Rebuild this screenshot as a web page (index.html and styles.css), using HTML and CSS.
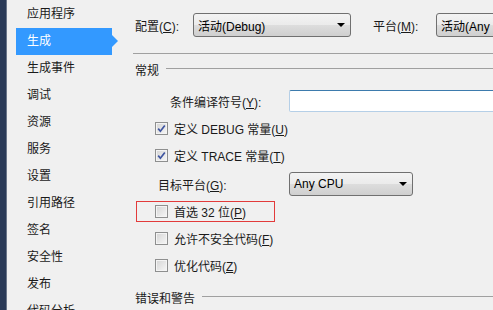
FILE: index.html
```html
<!DOCTYPE html>
<html lang="zh">
<head>
<meta charset="utf-8">
<link rel="stylesheet" href="styles.css">
</head>
<body>
<div class="app">
  <div class="strip"></div>
  <nav class="nav">
    <div class="nav-item">应用程序</div>
    <div class="nav-item selected">生成</div>
    <div class="nav-item">生成事件</div>
    <div class="nav-item">调试</div>
    <div class="nav-item">资源</div>
    <div class="nav-item">服务</div>
    <div class="nav-item">设置</div>
    <div class="nav-item">引用路径</div>
    <div class="nav-item">签名</div>
    <div class="nav-item">安全性</div>
    <div class="nav-item">发布</div>
    <div class="nav-item">代码分析</div>
  </nav>
  <main class="main">
    <div class="top-row">
      <span class="lbl-config">配置(<u>C</u>):</span>
      <div class="combo combo-config"><span>活动(Debug)</span><i class="arrow"></i></div>
      <span class="lbl-platform">平台(<u>M</u>):</span>
      <div class="combo combo-platform"><span>活动(Any CPU)</span><i class="arrow"></i></div>
    </div>
    <div class="sep"></div>
    <div class="section"><span>常规</span><div class="line"></div></div>
    <div class="field-row">
      <span class="lbl-symbols">条件编译符号(<u>Y</u>):</span>
      <div class="textbox"></div>
    </div>
    <div class="check-row first">
      <span class="cb checked"><svg width="11" height="11" viewBox="0 0 11 11"><path d="M2.2 5.6 L4.4 8.2 L8.8 2.4" fill="none" stroke="#3f55a0" stroke-width="1.7"/></svg></span>
      <span>定义 DEBUG 常量(<u>U</u>)</span>
    </div>
    <div class="check-row">
      <span class="cb checked"><svg width="11" height="11" viewBox="0 0 11 11"><path d="M2.2 5.6 L4.4 8.2 L8.8 2.4" fill="none" stroke="#3f55a0" stroke-width="1.7"/></svg></span>
      <span>定义 TRACE 常量(<u>T</u>)</span>
    </div>
    <div class="field-row target">
      <span class="lbl-target">目标平台(<u>G</u>):</span>
      <div class="combo combo-target"><span>Any CPU</span><i class="arrow"></i></div>
    </div>
    <div class="highlight">
      <span class="cb"></span>
      <span>首选 32 位(<u>P</u>)</span>
    </div>
    <div class="check-row">
      <span class="cb"></span>
      <span>允许不安全代码(<u>F</u>)</span>
    </div>
    <div class="check-row">
      <span class="cb"></span>
      <span>优化代码(<u>Z</u>)</span>
    </div>
    <div class="section bottom"><span>错误和警告</span><div class="line"></div></div>
  </main>
</div>
</body>
</html>
```
FILE: styles.css
```css
* { box-sizing: border-box; }
html, body {
  margin: 0;
  padding: 0;
  width: 493px;
  height: 310px;
  overflow: hidden;
  background: #f0f0f0;
}
body {
  font-family: "Liberation Sans", "Noto Sans CJK SC", sans-serif;
  font-size: 12px;
  color: #1a1a1a;
}
u { text-decoration: underline; text-underline-offset: 1px; }
.app {
  display: flex;
  height: 310px;
}
.strip {
  flex: none;
  background: #2a3a57;
  border-right: 1px solid #6b7689;
  width: 7px;
}
.nav {
  width: 113px;
  flex: none;
  padding-top: 1px;
}
.nav-item {
  height: 27px;
  line-height: 27px;
  padding-left: 20px;
  white-space: nowrap;
  position: relative;
}
.nav-item.selected {
  background: #3399ff;
  color: #fff;
  margin-left: 9px;
  width: 96px;
  padding-left: 11px;
}
.nav-item.selected::after {
  content: "";
  position: absolute;
  right: -6px;
  top: 7px;
  border-left: 6px solid #3399ff;
  border-top: 6px solid transparent;
  border-bottom: 6px solid transparent;
}
.main {
  flex: 1;
  overflow: hidden;
  padding-left: 13px;
  padding-top: 13px;
  white-space: nowrap;
}
.top-row {
  display: flex;
  align-items: center;
  height: 24px;
}
.lbl-config { width: 60px; padding-left: 2px; flex: none; }
.lbl-platform { width: 85px; padding-left: 22px; flex: none; }
.combo {
  flex: none;
  height: 24px;
  border: 1px solid #707070;
  border-radius: 3px;
  background: linear-gradient(#f3f3f3 0%, #ebebeb 50%, #dddddd 51%, #cfcfcf 100%);
  display: flex;
  align-items: center;
  padding-left: 4px;
  position: relative;
  color: #000;
}
.combo .arrow {
  position: absolute;
  right: 5px;
  top: 9px;
  border-top: 4px solid #000;
  border-left: 4px solid transparent;
  border-right: 4px solid transparent;
}
.combo-config { width: 158px; }
.combo-platform { width: 120px; }
.combo-target { width: 124px; }
.sep {
  height: 1px;
  background: #a0a0a0;
  margin-top: 16px;
}
.section {
  display: flex;
  align-items: center;
  height: 16px;
  margin-top: 7px;
  padding-left: 2px;
}
.section .line {
  flex: 1;
  height: 1px;
  background: #a0a0a0;
  margin-left: 7px;
  margin-top: -1px;
}
.field-row {
  display: flex;
  align-items: center;
  height: 22px;
  margin-top: 13px;
}
.lbl-symbols {
  width: 156px;
  padding-left: 37px;
  flex: none;
}
.textbox {
  width: 220px;
  height: 22px;
  background: #fff;
  border: 1px solid #b5cfe7;
  border-top-color: #3d7bad;
  border-radius: 2px;
  flex: none;
}
.check-row, .highlight {
  display: flex;
  align-items: center;
  height: 27px;
  padding-left: 22px;
}
.check-row.first { margin-top: 3px; }
.cb {
  width: 13px;
  height: 13px;
  flex: none;
  border: 1px solid #8e8f8f;
  background: linear-gradient(135deg, #d4d4d4, #f7f7f7);
  box-shadow: inset 0 0 0 1px #f4f4f4;
  margin-right: 6px;
  display: flex;
  align-items: center;
  justify-content: center;
}
.field-row.target {
  height: 24px;
  margin-top: 3px;
}
.lbl-target {
  width: 156px;
  padding-left: 25px;
  flex: none;
}
.highlight {
  height: 21px;
  margin-top: 5px;
  margin-left: 3px;
  width: 139px;
  padding-left: 18px;
  border: 1px solid #e23b3b;
}
.highlight + .check-row { margin-top: 3px; }
.section.bottom { margin-top: 10px; }
```
